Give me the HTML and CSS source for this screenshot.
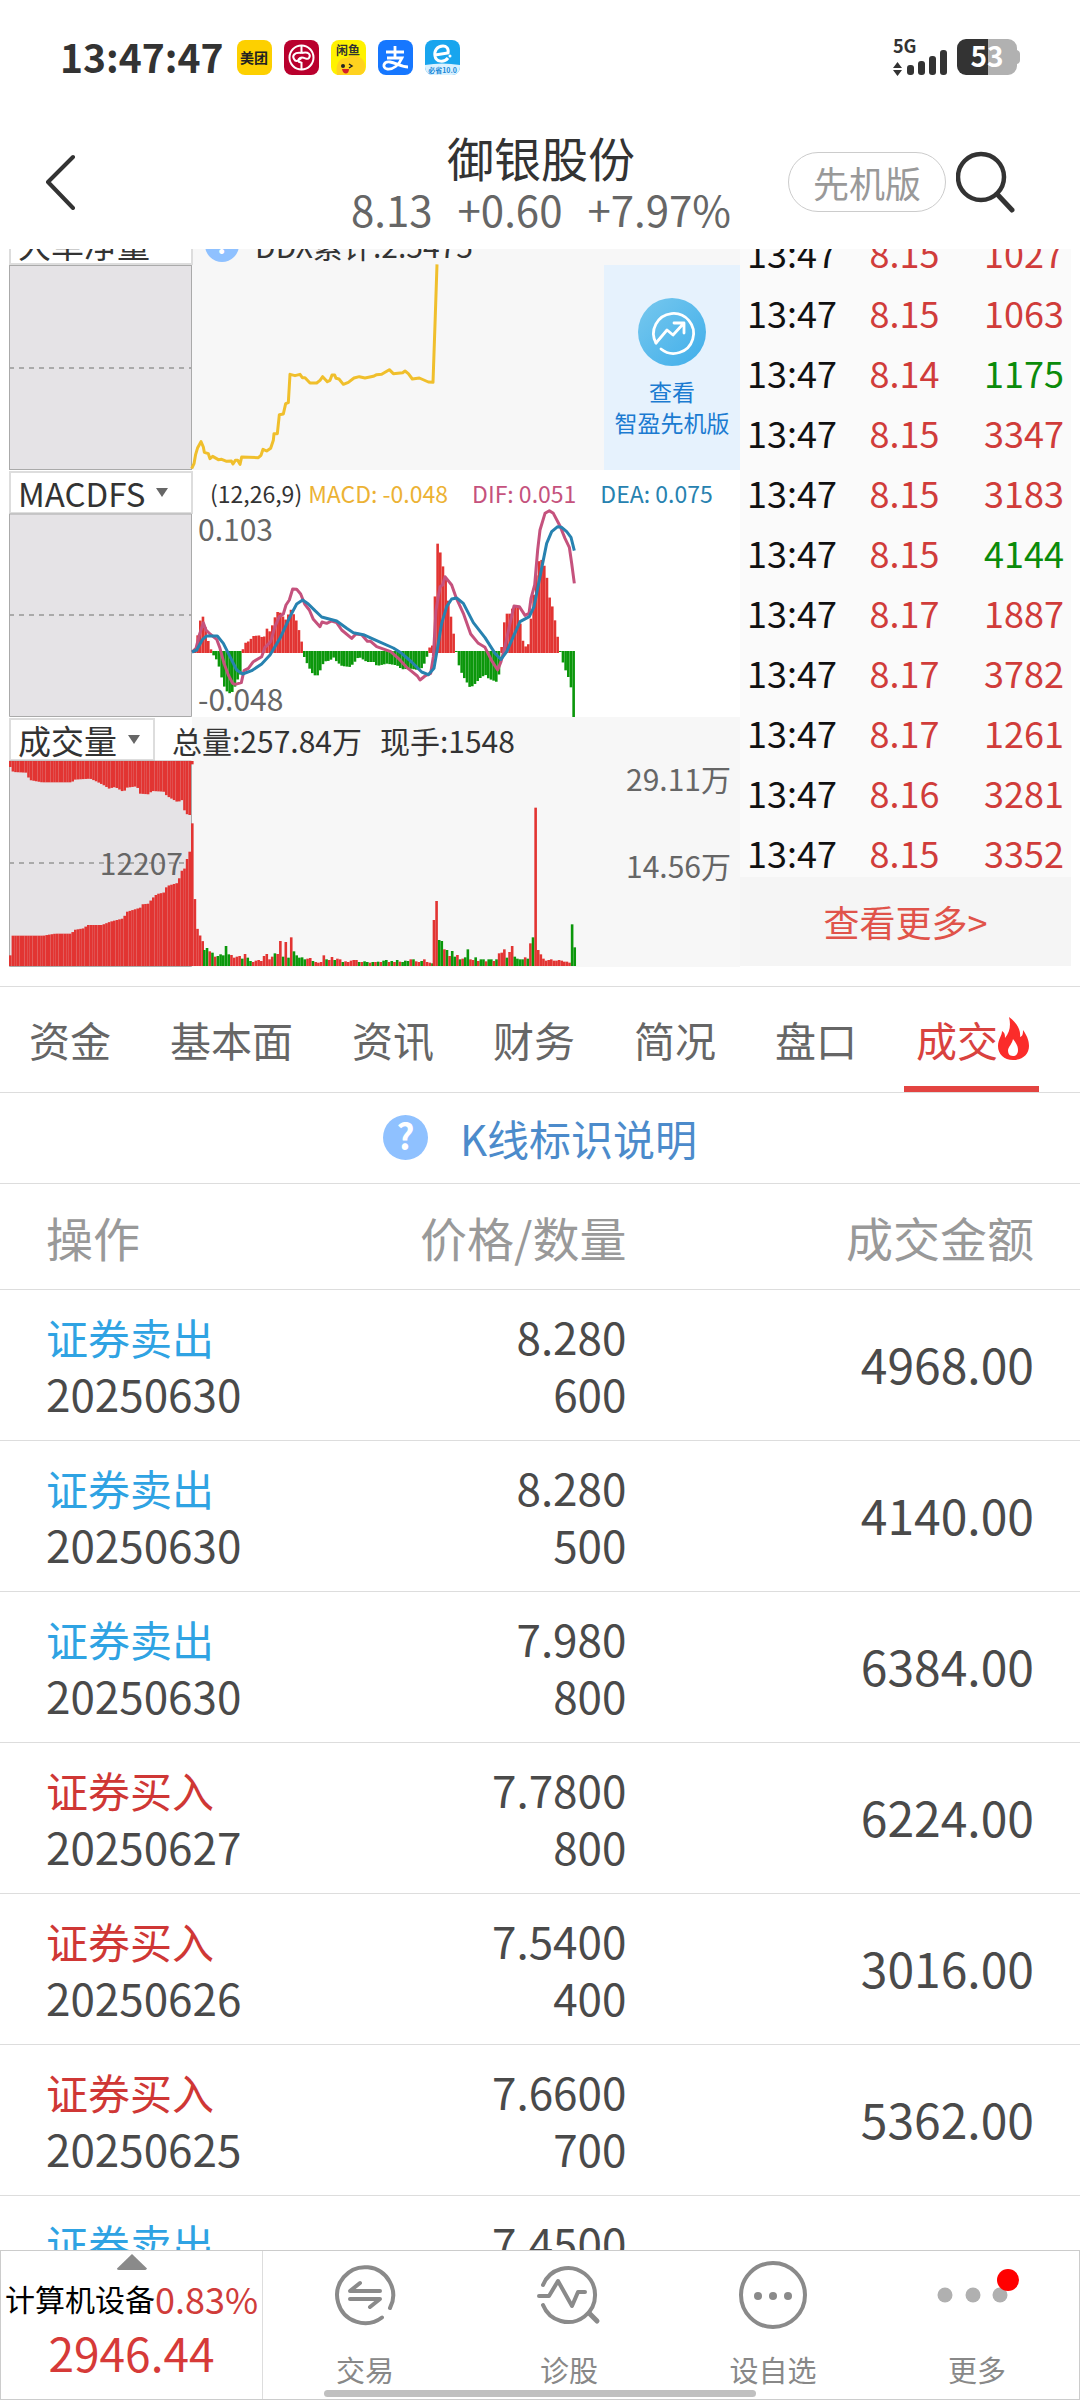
FILE: index.html
```html
<!DOCTYPE html>
<html lang="zh-CN">
<head>
<meta charset="utf-8">
<meta name="viewport" content="width=device-width, initial-scale=1">
<title>御银股份</title>
<link rel="stylesheet" href="styles.css">
</head>
<body>
<div class="app">
  <div class="status">
    <span class="clock">13:47:47</span>
    <svg class="badge" viewBox="0 0 35 35"><rect width="35" height="35" rx="8" fill="#fdd000"/><text x="17" y="23" font-size="14" font-weight="700" text-anchor="middle" fill="#222">美团</text></svg>
    <svg class="badge" viewBox="0 0 35 35"><rect width="35" height="35" rx="8" fill="#b9002d"/><g fill="none" stroke="#fff" stroke-width="2"><circle cx="17.500" cy="17.500" r="12"/><path d="M17.500 5v8M17.500 22v8M17.500 13C25 11 27 15 25 18C23 21 20 16 16 18C13 20 14 23 17.500 22M17.500 13C10 12 8 16 10 19C12 23 15 20 17.500 18"/></g></svg>
    <svg class="badge" viewBox="0 0 35 35"><rect width="35" height="35" rx="8" fill="#fff200"/><path d="M6 35c-2-12 3-18 10-17c6-5 16-2 18 6v5a6 6 0 0 1-6 6z" fill="#ffd21f"/><text x="17" y="15" font-size="12" font-weight="700" text-anchor="middle" fill="#333">闲鱼</text><circle cx="12" cy="26" r="2" fill="#222"/><path d="M18 24l3 2l-3 2" stroke="#222" stroke-width="1.500" fill="none"/><path d="M11 29h7c0 6-6 6-7 0z" fill="#d3202a"/></svg>
    <svg class="badge" viewBox="0 0 35 35"><rect width="35" height="35" rx="8" fill="#1677ff"/><path d="M8 12h18M17 6v12M9 18h15c-3 7-9 12-15 11c-5-1-4-8 3-7c6 1 12 5 18 5" fill="none" stroke="#fff" stroke-width="2.800"/></svg>
    <svg class="badge" viewBox="0 0 35 35"><rect width="35" height="35" rx="8" fill="#18a5ee"/><path d="M0 25q17-3 35 0v2a8 8 0 0 1-8 8h-19a8 8 0 0 1-8-8z" fill="#d9f1ff"/><path d="M10 15L23 13C24 8 21 6 18 6C12 6 9 11 10 16C11 22 19 23 23 18" fill="none" stroke="#fff" stroke-width="3"/><circle cx="25" cy="16" r="1.500" fill="#fff"/><text x="17.500" y="33" font-size="7" font-weight="700" text-anchor="middle" fill="#1787d8">必省10.0</text></svg>
    <svg class="signal" viewBox="892 38 130 40" role="img" aria-label="5G 53%">
      <text x="893" y="54" font-size="18" font-weight="700" fill="#333">5G</text>
      <path d="M893 69l4.500-6l4.500 6zM893 71h9l-4.500 6z" fill="#333"/>
      <g fill="#333"><rect x="907" y="66" width="7" height="10" rx="3"/><rect x="918" y="62" width="7" height="14" rx="3"/><rect x="929" y="57" width="7" height="19" rx="3"/><rect x="940" y="51" width="7" height="25" rx="3"/></g>
      <path d="M988 40h20a9 9 0 0 1 9 9v2q3 1 3 4v6q0 3-3 4v2a9 9 0 0 1-9 9h-20z" fill="#b1b1b1"/>
      <path d="M988 40h-22a9 9 0 0 0-9 9v18a9 9 0 0 0 9 9h22z" fill="#333"/>
      <text x="987" y="68" font-size="28" font-weight="700" text-anchor="middle" fill="#fff">53</text>
    </svg>
  </div>

  <header class="head">
    <button class="plain back" aria-label="返回"><svg viewBox="0 0 32 56" width="32" height="56"><path d="M29 3L4 28L29 54" fill="none" stroke="#333" stroke-width="4" stroke-linecap="round" stroke-linejoin="round"/></svg></button>
    <div class="title">
      <h1>御银股份</h1>
      <p class="quote"><span>8.13</span><span>+0.60</span><span>+7.97%</span></p>
    </div>
    <div class="tools">
      <button class="pill">先机版</button>
      <button class="plain" aria-label="搜索"><svg viewBox="0 0 60 62" width="60" height="62"><circle cx="25" cy="26" r="23" fill="none" stroke="#333" stroke-width="4.500"/><path d="M41 43L56 59" stroke="#333" stroke-width="5" stroke-linecap="round"/></svg></button>
    </div>
  </header>

  <main class="main">
    <section class="market">
      <div class="charts">
        <div class="panel tint">
          <div class="bar cut">
            <button class="picker wide">大单净量<i></i></button>
            <span class="legend ddx"><svg viewBox="0 0 45 45" width="34" height="34"><circle cx="22.500" cy="22.500" r="22.500" fill="#8fc1ff"/><text x="22.500" y="35" font-size="35" font-weight="700" text-anchor="middle" fill="#fff">?</text></svg>DDX累计:2.5475</span>
          </div>
          <div class="plot">
            <svg class="draw" viewBox="9 264 731 205">
              <rect x="9.500" y="264.500" width="182" height="204" class="pre"/>
              <path d="M9 367H192" class="mid"/>
              <path id="ddx" class="line" stroke="#f0bf2c"/>
            </svg>
            <a class="promo" href="#pro">
              <svg viewBox="0 0 68 68" width="68" height="68"><defs><linearGradient id="g" x1="0" y1="0" x2="1" y2="1"><stop offset="0" stop-color="#77c8ee"/><stop offset="1" stop-color="#40aeea"/></linearGradient></defs><circle cx="34" cy="34" r="34" fill="url(#g)"/><g fill="none" stroke="#fff" stroke-width="2.800" stroke-linecap="round" stroke-linejoin="round"><path d="M18 45A20 20 0 1 1 23 51"/><path d="M18 45L29 32L35 37L46 25M36 25H46V35"/></g></svg>
              <span>查看</span><span>智盈先机版</span>
            </a>
          </div>
        </div>
        <div class="panel">
          <div class="bar">
            <button class="picker wide">MACDFS<i></i></button>
            <span class="legend small"><span>(12,26,9)</span><span class="c-macd">MACD: -0.048</span><span class="c-dif">DIF: 0.051</span><span class="c-dea">DEA: 0.075</span></span>
          </div>
          <svg class="draw" viewBox="9 514 731 203">
            <path d="M9.500 514V716.500H191.500V514z" class="pre"/>
            <path d="M9 615H192" class="mid"/>
            <g id="macd"></g>
            <text x="198" y="541" class="axis">0.103</text>
            <text x="198" y="711" class="axis">-0.048</text>
            <path id="dif" class="line" stroke="#c5527d"/>
            <path id="dea" class="line" stroke="#2782b0"/>
          </svg>
        </div>
        <div class="panel tint">
          <div class="bar">
            <button class="picker">成交量<i></i></button>
            <span class="legend mid-size"><span>总量:257.84万</span><span>现手:1548</span></span>
          </div>
          <svg class="draw" viewBox="9 760 731 206">
            <path d="M9.500 760V965.500H191.500V760z" class="pre"/>
            <path d="M9 862H192" class="mid"/>
            <g id="vol"></g>
            <text x="183" y="874" text-anchor="end" class="axis">12207</text>
            <text x="731" y="790" text-anchor="end" class="axis">29.11万</text>
            <text x="731" y="877" text-anchor="end" class="axis">14.56万</text>
          </svg>
        </div>
      </div>
      <div class="ticks">
        <table class="tick-table">
          <tbody>
            <tr><td>13:47</td><td>8.15</td><td class="up">1027</td></tr>
            <tr><td>13:47</td><td>8.15</td><td class="up">1063</td></tr>
            <tr><td>13:47</td><td>8.14</td><td class="down">1175</td></tr>
            <tr><td>13:47</td><td>8.15</td><td class="up">3347</td></tr>
            <tr><td>13:47</td><td>8.15</td><td class="up">3183</td></tr>
            <tr><td>13:47</td><td>8.15</td><td class="down">4144</td></tr>
            <tr><td>13:47</td><td>8.17</td><td class="up">1887</td></tr>
            <tr><td>13:47</td><td>8.17</td><td class="up">3782</td></tr>
            <tr><td>13:47</td><td>8.17</td><td class="up">1261</td></tr>
            <tr><td>13:47</td><td>8.16</td><td class="up">3281</td></tr>
            <tr><td>13:47</td><td>8.15</td><td class="up">3352</td></tr>
          </tbody>
        </table>
        <a class="more" href="#ticks">查看更多&gt;</a>
      </div>
    </section>

    <nav class="tabs">
      <a href="#t1">资金</a><a href="#t2">基本面</a><a href="#t3">资讯</a><a href="#t4">财务</a><a href="#t5">简况</a><a href="#t6">盘口</a>
      <a href="#t7" class="on">成交<svg viewBox="0 0 31 43" width="31" height="43"><path d="M11 0C19 6 23 13 22 20C25 19 25 16 25 13C30 20 31 25 31 29C31 37 25 43 15 43C6 43 0 37 0 29C0 22 4 19 4 14C7 16 7 18 7 21C12 15 13 8 11 0z" fill="#fb2c2a"/><path d="M15 22C18 26 20 29 20 33C20 37 18 39 15 39C11 39 10 36 10 33C11 29 14 27 15 22z" fill="#fff"/></svg></a>
    </nav>

    <a class="help" href="#help">
      <svg viewBox="0 0 45 45" width="45" height="45"><circle cx="22.500" cy="22.500" r="22.500" fill="#8fc1ff"/><text x="22.500" y="35" font-size="35" font-weight="700" text-anchor="middle" fill="#fff">?</text></svg>
      <span>K线标识说明</span>
    </a>

    <table class="deals">
      <thead><tr><th>操作</th><th>价格/数量</th><th>成交金额</th></tr></thead>
      <tbody>
        <tr><td><b class="sell">证券卖出</b>20250630</td><td><b>8.280</b>600</td><td>4968.00</td></tr>
        <tr><td><b class="sell">证券卖出</b>20250630</td><td><b>8.280</b>500</td><td>4140.00</td></tr>
        <tr><td><b class="sell">证券卖出</b>20250630</td><td><b>7.980</b>800</td><td>6384.00</td></tr>
        <tr><td><b class="buy">证券买入</b>20250627</td><td><b>7.7800</b>800</td><td>6224.00</td></tr>
        <tr><td><b class="buy">证券买入</b>20250626</td><td><b>7.5400</b>400</td><td>3016.00</td></tr>
        <tr><td><b class="buy">证券买入</b>20250625</td><td><b>7.6600</b>700</td><td>5362.00</td></tr>
        <tr><td><b class="sell">证券卖出</b>&nbsp;</td><td><b>7.4500</b>&nbsp;</td><td></td></tr>
      </tbody>
    </table>
  </main>

  <footer class="foot">
    <button class="plain index">
      <svg viewBox="0 0 30 16" width="30" height="16"><path d="M15 0L30 14.500Q29 16 28 16H2Q0 16 0 14.500z" fill="#8a8a8a"/></svg>
      <span class="sector">计算机设备<em>0.83%</em></span>
      <strong>2946.44</strong>
    </button>
    <button class="plain item">
      <svg viewBox="-36 -36 72 72" width="72" height="72"><g fill="none" stroke="#8a8a8a" stroke-width="4" stroke-linecap="round" stroke-linejoin="round"><path d="M25 13A28 28 0 1 0 17 22.500"/><path d="M15 -4H-15L-5 -12M-15 4H15L5 12"/></g></svg>
      <span>交易</span>
    </button>
    <button class="plain item">
      <svg viewBox="-36 -36 72 72" width="72" height="72"><g fill="none" stroke="#8a8a8a" stroke-width="4" stroke-linecap="round" stroke-linejoin="round"><path d="M-26 -10A27 27 0 1 1 -26 10"/><path d="M-30 1H-20L-11 -14L3 11L9 -3H16"/><path d="M20 18L28 26" stroke-width="5"/></g></svg>
      <span>诊股</span>
    </button>
    <button class="plain item">
      <svg viewBox="-36 -36 72 72" width="72" height="72"><circle r="32" fill="none" stroke="#8a8a8a" stroke-width="4"/><g fill="#8a8a8a"><circle cx="-15" cy="1" r="4"/><circle cy="1" r="4"/><circle cx="15" cy="1" r="4"/></g></svg>
      <span>设自选</span>
    </button>
    <button class="plain item">
      <svg viewBox="-44 -36 88 72" width="88" height="72"><g fill="#b0b0b0"><circle cx="-32" r="7.500"/><circle cx="-4" r="7.500"/><circle cx="23" r="7.500"/></g><circle cx="31" cy="-15" r="11" fill="#f00"/></svg>
      <span>更多</span>
    </button>
    <div class="home"></div>
  </footer>
</div>
<script src="charts.js"></script>
</body>
</html>
```
FILE: styles.css
```css
* { box-sizing: border-box; margin: 0; padding: 0; }
html { font-family: "Noto Sans CJK SC", "Noto Sans", sans-serif; color: #333; background: #fff; }
a { color: inherit; text-decoration: none; }
button { font: inherit; color: inherit; background: none; }
svg { display: block; flex: none; }
svg text { font-family: inherit; }
table { border-collapse: collapse; width: 100%; table-layout: fixed; }
.plain { border: 0; }

.app { height: 100vh; display: flex; flex-direction: column; overflow: hidden; }

.status { display: flex; align-items: center; gap: 12px; height: 112px; padding: 2px 58px 0 60px; flex: none; }
.clock { font-size: 39px; font-weight: 600; line-height: 48px; padding: 0 2px 2px 0; }
.badge { width: 35px; height: 35px; }
.signal { width: 130px; height: 40px; margin-left: auto; }

.head { display: grid; grid-template-columns: 1fr auto 1fr; align-items: center; height: 137px; padding: 2px 64px 0 44px; flex: none; }
.back { justify-self: start; }
.title { text-align: center; padding-left: 22px; }
.title h1 { font-size: 47px; line-height: 54px; font-weight: 400; }
.quote { display: flex; gap: 25px; font-size: 42px; line-height: 50px; color: #666; }
.tools { display: flex; align-items: center; gap: 10px; justify-self: end; }
.pill { height: 60px; padding: 0 24px; border: 1px solid #ccc; border-radius: 30px; font-size: 36px; line-height: 52px; color: #999; }

.main { flex: 1; min-height: 0; overflow: hidden; }
.market { display: grid; grid-template-columns: 731fr 331fr; padding: 0 9px; margin-bottom: 19px; }
.charts { display: flex; flex-direction: column; }
.panel.tint { background: linear-gradient(90deg, #fff 25%, #f7f7f7 25%); }
.bar { display: flex; align-items: center; height: 44px; padding-top: 1px; }
.bar.cut { height: 16px; align-items: flex-end; overflow: hidden; }
.picker { display: flex; align-items: center; gap: 11px; height: 43px; padding: 0 13px 0 7px; border: 2px solid #ddd; background: #fff; font-size: 33px; line-height: 36px; flex: none; }
.picker.wide { width: 184px; }
.picker i { border: 6px solid transparent; border-top: 9px solid #666; border-bottom: 0; }
.legend { display: flex; align-items: center; margin-left: 17px; white-space: nowrap; line-height: 40px; }
.legend.ddx { font-size: 30px; gap: 16px; margin-left: 12px; }
.legend.small { font-size: 23px; gap: 24px; }
.legend.small .c-macd { margin-left: -18px; }
.legend.mid-size { font-size: 30px; gap: 18px; }
.c-macd { color: #ecb234; }
.c-dif { color: #c5527d; }
.c-dea { color: #2782b0; }
.plot { display: flex; position: relative; }
.draw { width: 100%; height: auto; overflow: visible; }
.pre { fill: #e5e3e6; stroke: #aaa; stroke-width: 1px; }
.mid { stroke: #aaa; stroke-width: 2px; stroke-dasharray: 5 5; fill: none; }
.line { fill: none; stroke-width: 3px; stroke-linejoin: round; }
.axis { font-size: 30px; fill: #666; }
.red { fill: #e23432; }
.green { fill: #0b970b; }
.promo { position: absolute; right: 0; top: 0; bottom: 0; width: 136px; display: flex; flex-direction: column; align-items: center; padding-top: 33px; background: #e6f2fd; color: #1b7bd1; font-size: 23px; line-height: 31px; }
.promo svg { margin-bottom: 10px; }

.ticks { display: flex; flex-direction: column; justify-content: flex-end; height: 717px; overflow: hidden; background: #fafafa; }
.tick-table td { height: 60px; padding: 10px 7px 0; font-size: 36px; line-height: 44px; color: #d03c3a; white-space: nowrap; }
.tick-table td:first-child { width: 37%; color: #111; }
.tick-table td:last-child { text-align: right; }
.tick-table td.down { color: #0b8b0b; }
.more { display: block; background: #f5f5f5; text-align: center; font-size: 36px; line-height: 89px; color: #e0534a; flex: none; }

.tabs { display: flex; justify-content: space-between; padding: 0 41px 0 17px; border-top: 1px solid #ddd; border-bottom: 1px solid #ddd; font-size: 41px; line-height: 104px; color: #666; }
.tabs a { display: flex; height: 105px; padding: 0 12px; }
.tabs .on { color: #d9423f; border-bottom: 6px solid #e34441; border-radius: 4px 4px 0 0; padding-right: 10px; }
.tabs svg { margin-top: 30px; }

.help { display: flex; justify-content: center; align-items: center; gap: 32px; height: 91px; padding-bottom: 2px; border-bottom: 1px solid #ddd; font-size: 42px; color: #4c8bcb; }

.deals { color: #4a4a4a; font-size: 44px; }
.deals tr { border-bottom: 1px solid #ddd; }
.deals th { font-weight: 400; font-size: 47px; line-height: 105px; color: #999; text-align: right; }
.deals td { height: 151px; line-height: 57px; text-align: right; }
.deals th:first-child, .deals td:first-child { text-align: left; padding-left: 46px; width: 30%; }
.deals th:nth-child(2) { width: 28%; }
.deals th:last-child, .deals td:last-child { padding-right: 46px; }
.deals td:last-child { font-size: 48px; padding-bottom: 3px; }
.deals b { display: block; font-weight: 400; }
.deals td:first-child b { font-size: 42px; }
.sell { color: #2fa3e3; }
.buy { color: #cf3735; }

.foot { position: relative; display: flex; height: 150px; border: 1px solid #ccc; background: #fff; flex: none; color: #888; }
.index { width: 262px; border-right: 1px solid #ddd; display: flex; flex-direction: column; align-items: center; padding-top: 3px; white-space: nowrap; }
.sector { display: flex; align-items: center; font-size: 30px; line-height: 56px; color: #000; }
.sector em { font-style: normal; font-size: 36px; color: #d03c3a; }
.index strong { font-weight: 400; font-size: 46px; line-height: 52px; color: #d63a38; }
.item { flex: 1; display: flex; flex-direction: column; align-items: center; padding-top: 8px; font-size: 29px; line-height: 36px; }
.item span { margin-top: 20px; }
.home { position: absolute; left: 30%; right: 30%; bottom: 2px; height: 7px; border-radius: 4px; background: #c0c0c0; }
```
FILE: charts.js
```js
// Plot values are kept at three units per chart pixel.
const NS = 'http://www.w3.org/2000/svg';

function line(id, pts, ox, oy) {
  const d = pts.map(([x, y]) => `${ox + x / 3} ${oy + y / 3}`).join('L');
  document.getElementById(id).setAttribute('d', 'M' + d);
}

function bar(group, x, y0, y1, cls) {
  const r = document.createElementNS(NS, 'rect');
  r.setAttribute('x', x);
  r.setAttribute('y', Math.min(y0, y1));
  r.setAttribute('width', 2.6);
  r.setAttribute('height', Math.abs(y1 - y0));
  r.setAttribute('class', cls);
  group.appendChild(r);
}

function at(keys, x) {
  for (let i = 1; i < keys.length; i++) {
    const [x0, v0] = keys[i - 1], [x1, v1] = keys[i];
    if (x <= x1) return v0 + (v1 - v0) * (x - x0) / (x1 - x0);
  }
  return keys[keys.length - 1][1];
}

line('ddx', [[575,683],[582,668],[587,640],[593,620],[603,602],[610,618],[613,634],[625,638],[630,653],[638,646],[655,656],[665,655],[680,661],[694,660],[699,669],[706,658],[713,658],[720,670],[725,648],[775,650],[783,643],[789,625],[800,630],[812,622],[820,598],[822,578],[832,578],[838,521],[850,519],[857,488],[865,485],[870,400],[885,404],[900,400],[907,410],[915,410],[930,426],[950,426],[960,418],[968,407],[982,422],[990,418],[996,402],[1004,402],[1008,412],[1017,414],[1030,430],[1045,424],[1062,411],[1078,407],[1095,411],[1120,406],[1130,401],[1145,400],[1168,386],[1180,398],[1208,395],[1215,390],[1225,398],[1237,414],[1258,411],[1285,423],[1299,424],[1305,250],[1311,70]], 0, 240);

const macd = [[40,5],[45,10],[52,50],[58,88],[66,113],[74,85],[82,40],[90,12],[96,0],[100,-10],[110,-25],[118,-50],[126,-85],[134,-110],[145,-125],[160,-118],[168,-90],[184,-60],[187,0],[190,25],[205,32],[220,48],[240,50],[250,38],[258,72],[270,60],[282,100],[295,126],[305,110],[318,95],[330,130],[345,105],[355,70],[362,40],[370,5],[372,-15],[385,-45],[400,-70],[415,-70],[425,-40],[435,-28],[450,-26],[458,-14],[470,-30],[485,-42],[510,-45],[525,-28],[535,-14],[560,-30],[580,-30],[590,-42],[620,-35],[650,-40],[665,-52],[690,-50],[720,-55],[735,-30],[742,-8],[746,12],[757,20],[762,105],[768,290],[772,325],[782,292],[790,245],[798,210],[803,160],[810,118],[818,70],[826,10],[830,-10],[838,-50],[850,-75],[870,-108],[885,-95],[900,-78],[915,-68],[925,-80],[950,-90],[958,-60],[962,-20],[966,50],[976,115],[990,115],[1000,140],[1012,138],[1018,100],[1026,40],[1034,15],[1046,25],[1052,100],[1062,190],[1068,230],[1074,270],[1082,280],[1090,265],[1098,240],[1106,170],[1118,130],[1130,60],[1137,10],[1143,-10],[1150,-40],[1160,-65],[1170,-90],[1175,-130],[1180,-200]];
const mg = document.getElementById('macd');
for (let x = 44; x < 1188; x += 8) {
  const v = at(macd, x);
  bar(mg, 180 + x / 3 - 1, v > 0 ? 653 : 651, 652 - v / 3, v > 0 ? 'red' : 'green');
}
line('dif', [[36,546],[48,535],[58,495],[70,458],[78,480],[90,492],[110,508],[120,535],[132,580],[145,615],[158,640],[166,643],[184,638],[192,602],[205,595],[220,575],[245,560],[255,532],[272,515],[285,470],[298,440],[310,432],[318,405],[328,390],[338,357],[350,358],[362,372],[374,402],[388,420],[400,448],[420,470],[426,456],[440,460],[455,453],[470,458],[485,480],[515,505],[528,492],[545,494],[562,514],[572,514],[590,530],[632,545],[655,565],[680,592],[695,604],[712,618],[720,630],[735,618],[752,610],[760,560],[768,420],[780,350],[788,345],[795,320],[815,345],[828,382],[850,430],[872,492],[895,520],[915,532],[935,572],[953,600],[963,575],[975,530],[990,460],[1002,408],[1018,410],[1035,436],[1047,430],[1053,385],[1064,345],[1073,240],[1080,180],[1095,130],[1108,122],[1120,130],[1140,168],[1155,205],[1168,232],[1175,280],[1183,340]], 180, 470);
line('dea', [[36,546],[50,540],[68,508],[80,498],[112,498],[130,520],[150,560],[170,600],[188,612],[215,602],[245,582],[270,555],[300,505],[330,440],[350,402],[368,390],[385,402],[405,422],[425,441],[470,453],[500,475],[520,488],[550,494],[590,512],[640,534],[665,550],[695,576],[725,606],[745,614],[762,595],[775,520],[785,460],[800,410],[815,387],[830,384],[850,400],[880,458],[915,503],[945,550],[963,568],[980,545],[1000,500],[1020,455],[1048,440],[1062,410],[1072,360],[1086,290],[1100,220],[1115,185],[1133,170],[1145,172],[1160,185],[1173,202],[1183,242]], 180, 470);

// Auction volume: bars grow from the floor and hang from the ceiling.
const vg = document.getElementById('vol');
const floor = [[30,733],[34,733],[36,674],[130,674],[140,672],[165,668],[215,668],[220,657],[250,652],[262,642],[305,642],[330,632],[370,622],[378,603],[420,590],[425,580],[445,578],[455,563],[470,549],[490,545],[500,525],[535,515],[540,482],[552,475],[560,445],[568,425],[574,337],[580,337],[585,636],[594,660],[602,680],[608,692]];
const ceiling = [[30,168],[36,168],[38,183],[78,185],[88,207],[125,214],[215,214],[222,206],[270,203],[290,212],[315,225],[325,233],[345,228],[370,243],[380,230],[410,226],[420,248],[445,250],[455,240],[490,242],[500,255],[535,275],[543,260],[552,297],[562,312],[570,312],[576,160]];
for (let x = 30; x < 612; x += 7.8) {
  bar(vg, x / 3 - 1, 965, 710 + at(floor, x) / 3, 'red');
  if (x < 578) bar(vg, x / 3 - 1, 760, 710 + at(ceiling, x) / 3, 'red');
}

const trades = 'g48 g54 r44 g40 r28 g30 g35 g32 g60 g35 r33 r25 r28 r30 g22 r36 g25 g15 r12 r16 r18 r15 r30 r36 r20 r28 g38 r36 r75 g28 r72 g25 r86 g44 g32 g25 g26 g20 r22 r24 g15 r12 r10 r12 r32 g20 r18 r27 g18 r22 r20 g12 r14 r12 r16 r18 r18 g12 r12 g14 g12 r10 g12 r12 g13 r12 g16 g18 r12 g15 r12 g18 r13 g12 g16 g15 r20 g20 r14 r12 g15 r20 r12 r10 g8'.split(' ');
trades.forEach((t, i) => bar(vg, (612 + i * 8.15) / 3 - 1, 965, 965 - t.slice(1) / 3, t[0] === 'r' ? 'red' : 'green'));
const late = 'r138 r195 g78 g75 r50 g48 r30 g45 g28 r33 g20 r22 g26 g50 r20 r18 g26 r15 g20 g20 r14 g20 g20 r15 g20 r38 r40 r50 g25 r42 r60 g28 g22 g20 g20 r26 g22 r68 g86 r475 r48 r35 r22 r16 r18 r20 r16 r16 r18 r16 r13 r13 r10 g125 g56'.split(' ');
late.forEach((t, i) => bar(vg, 380 + (161 + i * 7.82) / 3 - 1, 965, 965 - t.slice(1) / 3, t[0] === 'r' ? 'red' : 'green'));
```
